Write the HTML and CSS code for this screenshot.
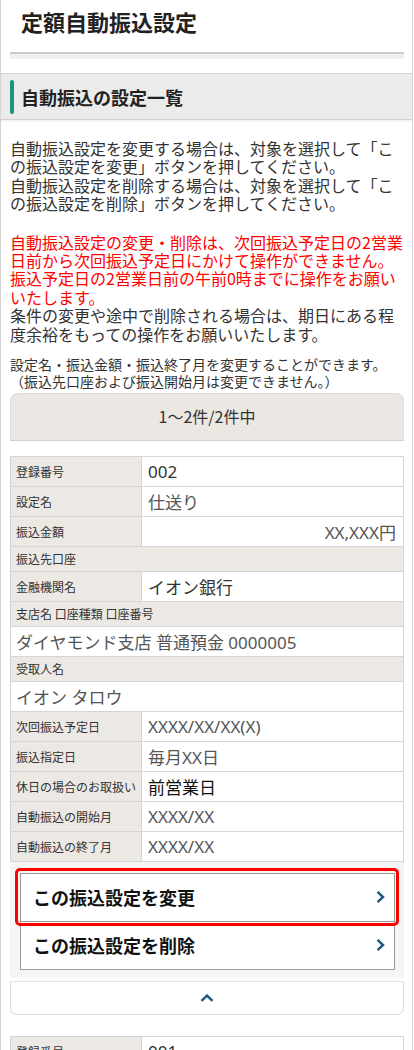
FILE: index.html
```html
<!DOCTYPE html>
<html lang="ja">
<head>
    <meta charset="UTF-8">
    <meta name="viewport" content="width=device-width, initial-scale=1.0">
    <title>定額自動振込設定</title>
    <link rel="stylesheet" href="styles.css">
</head>
<body>
<div class="page">
    <header class="page-head">
        <h1 class="page-title">定額自動振込設定</h1>
        <div class="rule"></div>
    </header>

    <h2 class="section-title"><span class="section-bar"></span>自動振込の設定一覧</h2>

    <div class="content">
        <p class="lead">自動振込設定を変更する場合は、対象を選択して「この振込設定を変更」ボタンを押してください。<br>自動振込設定を削除する場合は、対象を選択して「この振込設定を削除」ボタンを押してください。</p>

        <p class="lead notice"><span class="red">自動振込設定の変更・削除は、次回振込予定日の2営業日前から次回振込予定日にかけて操作ができません。<br>振込予定日の2営業日前の午前0時までに操作をお願いいたします。</span><br>条件の変更や途中で削除される場合は、期日にある程度余裕をもっての操作をお願いいたします。</p>

        <p class="small">設定名・振込金額・振込終了月を変更することができます。<br>（振込先口座および振込開始月は変更できません。）</p>

        <div class="pager">1〜2件/2件中</div>

        <table class="detail">
            <tr><th>登録番号</th><td class="dark">002</td></tr>
            <tr><th>設定名</th><td>仕送り</td></tr>
            <tr><th>振込金額</th><td class="num">XX,XXX円</td></tr>
            <tr class="sub"><th colspan="2">振込先口座</th></tr>
            <tr><th>金融機関名</th><td class="dark">イオン銀行</td></tr>
            <tr class="sub"><th colspan="2">支店名 口座種類 口座番号</th></tr>
            <tr><td colspan="2" class="wide">ダイヤモンド支店 普通預金 0000005</td></tr>
            <tr class="sub"><th colspan="2">受取人名</th></tr>
            <tr><td colspan="2" class="wide">イオン タロウ</td></tr>
            <tr><th>次回振込予定日</th><td>XXXX/XX/XX(X)</td></tr>
            <tr><th>振込指定日</th><td>毎月XX日</td></tr>
            <tr><th>休日の場合のお取扱い</th><td class="darker">前営業日</td></tr>
            <tr><th>自動振込の開始月</th><td>XXXX/XX</td></tr>
            <tr><th>自動振込の終了月</th><td>XXXX/XX</td></tr>
        </table>

        <div class="actions">
            <a href="#" class="action selected">この振込設定を変更
                <svg class="chev" width="9" height="14" viewBox="0 0 9 14"><polyline points="1.6,1.8 7,7 1.6,12.2" fill="none" stroke="#1d5a80" stroke-width="2.5"/></svg>
            </a>
            <a href="#" class="action">この振込設定を削除
                <svg class="chev" width="9" height="14" viewBox="0 0 9 14"><polyline points="1.6,1.8 7,7 1.6,12.2" fill="none" stroke="#1d5a80" stroke-width="2.5"/></svg>
            </a>
        </div>

        <div class="collapse">
            <svg width="14" height="8" viewBox="0 0 14 8"><polyline points="1.5,6.8 7,1.6 12.5,6.8" fill="none" stroke="#1d5a80" stroke-width="2.5"/></svg>
        </div>

        <table class="detail next">
            <tr><th>登録番号</th><td class="dark">001</td></tr>
            <tr><th>設定名</th><td>仕送り</td></tr>
        </table>
    </div>
</div>
</body>
</html>
```

FILE: styles.css
```css
body {
    margin: 0;
    font-family: "Noto Sans CJK JP", "Noto Sans", sans-serif;
    color: #333;
    background: #fff;
}

.page {
    width: 413px;
    height: 1050px;
    overflow: hidden;
    box-sizing: border-box;
    border-left: 1px solid #d5d5d5;
    border-right: 1px solid #d5d5d5;
}

.page-head {
    padding: 6px 8px 0 9px;
}
.page-title {
    margin: 0;
    padding-left: 11px;
    font-size: 22px;
    line-height: 30px;
    font-weight: bold;
    color: #222;
}
.rule {
    margin-top: 16px;
    border-top: 2px solid #cacaca;
    height: 5px;
    background: #efefef;
}

.section-title {
    display: flex;
    align-items: center;
    gap: 7px;
    margin: 14px 0 0;
    height: 45px;
    padding-left: 9px;
    border-top: 1px solid #d5d5d5;
    border-bottom: 1px solid #cfcfcf;
    box-shadow: 0 2px 0 #f3f3f3;
    background: #ebebeb;
    font-size: 18px;
    font-weight: bold;
    color: #222;
}
.section-bar {
    width: 4px;
    height: 34px;
    border-radius: 2px;
    background: #17967a;
}

.content {
    padding: 0 8px 0 9px;
}

.lead {
    margin: 19px 0 0;
    font-size: 16px;
    line-height: 18.4px;
    color: #333;
}
.notice {
    margin-top: 20px;
}
.red {
    color: #ff0000;
}
.small {
    margin: 13px 0 0;
    font-size: 14px;
    line-height: 17.3px;
    color: #333;
}

.pager {
    margin-top: 2px;
    height: 46px;
    line-height: 44px;
    text-align: center;
    font-size: 16px;
    color: #333;
    background: #ece7e3;
    border: 1px solid #dcdcdc;
    border-bottom-color: #d0d0d0;
    border-radius: 8px 8px 0 0;
}

.detail {
    width: 100%;
    margin-top: 15px;
    border-collapse: collapse;
}
.detail th,
.detail td {
    border: 1px solid #d5d5d5;
    height: 29px;
    padding: 0;
}
.detail th {
    width: 125px;
    padding-left: 5px;
    background: #ece8e4;
    text-align: left;
    font-size: 12px;
    font-weight: normal;
    color: #333;
    white-space: nowrap;
}
.detail td {
    padding: 0 7px 0 6px;
    font-family: "Noto Sans", "Noto Sans CJK JP", sans-serif;
    font-size: 17px;
    color: #555;
    background: #fff;
}
.detail .sub th {
    height: 24px;
}
.detail td.wide {
    padding-left: 5px;
}
.detail td.num {
    text-align: right;
}
.detail td.dark {
    color: #333;
}
.detail td.darker {
    color: #111;
}

.actions {
    display: flex;
    flex-direction: column;
    padding: 11px 9px 8px 10px;
    background: #f5f5f5;
}
.action {
    position: relative;
    display: flex;
    align-items: center;
    justify-content: space-between;
    height: 47px;
    padding: 0 9px 0 12px;
    border: 1px solid #9a9a9a;
    background: #fff;
    font-size: 18px;
    font-weight: bold;
    color: #111;
    text-decoration: none;
}
.action + .action {
    margin-top: -1px;
}
.action.selected {
    z-index: 1;
}
.action.selected::after {
    content: "";
    position: absolute;
    top: -6px;
    left: -6px;
    right: -5px;
    bottom: -5px;
    border: 3px solid #f00;
    border-radius: 5px;
}

.collapse {
    display: flex;
    justify-content: center;
    align-items: center;
    height: 32px;
    margin-top: 3px;
    border: 1px solid #dcdcdc;
    border-top-color: #e2e2e2;
    border-radius: 0 0 7px 7px;
    background: #fff;
}

.detail.next {
    margin-top: 21px;
}
```
